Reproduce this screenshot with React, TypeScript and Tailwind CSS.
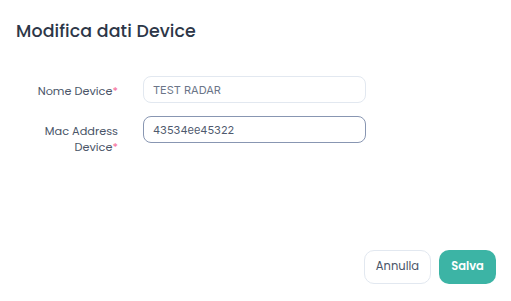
import React from "react";

export default function App() {
  const font = { fontFamily: "Poppins, Inter, 'Noto Sans', sans-serif" };
  return (
    <div className="w-[511px] h-[301px] bg-white flex flex-col text-[#2d3748]" style={font}>
      <div className="pl-4 pt-[20px] h-[57px]">
        <h1 className="text-[17.4px] leading-[22px] font-medium text-[#2d3748] tracking-[0.1px]">Modifica dati Device</h1>
      </div>
      <div className="flex flex-col gap-[13px] pt-[19px]">
        <div className="flex items-center">
          <label className="w-[118px] text-right text-[11.3px] text-[#4a5568] leading-[16px] pt-[3px]">
            Nome Device<span className="text-[#f56593]">*</span>
          </label>
          <input
            defaultValue="TEST RADAR"
            className="ml-[25px] w-[223px] h-[27px] rounded-[8px] border border-[#e2e8f0] px-[9px] pt-[1px] text-[11px] text-[#6b7588] outline-none font-['Inter']"
          />
        </div>
        <div className="flex items-start">
          <label className="w-[118px] text-right text-[11.3px] text-[#4a5568] leading-[16px] pt-[7px]">
            Mac Address<br />Device<span className="text-[#f56593]">*</span>
          </label>
          <input
            defaultValue="43534ee45322"
            className="ml-[25px] w-[223px] h-[27px] rounded-[8px] border border-[#8896b2] px-[9px] pt-[1px] text-[11px] text-[#4f5a6e] outline-none font-['Inter']"
          />
        </div>
      </div>
      <div className="flex-1" />
      <div className="flex justify-end gap-[8px] pr-[15px] pb-[17px]">
        <button className="w-[67px] h-[34px] rounded-[10px] border border-[#e2e8f0] bg-white text-[11.5px] text-[#4a5568]">
          Annulla
        </button>
        <button className="w-[57px] h-[34px] rounded-[10px] bg-[#3cb4a5] text-white text-[11.5px] font-semibold">
          Salva
        </button>
      </div>
    </div>
  );
}
